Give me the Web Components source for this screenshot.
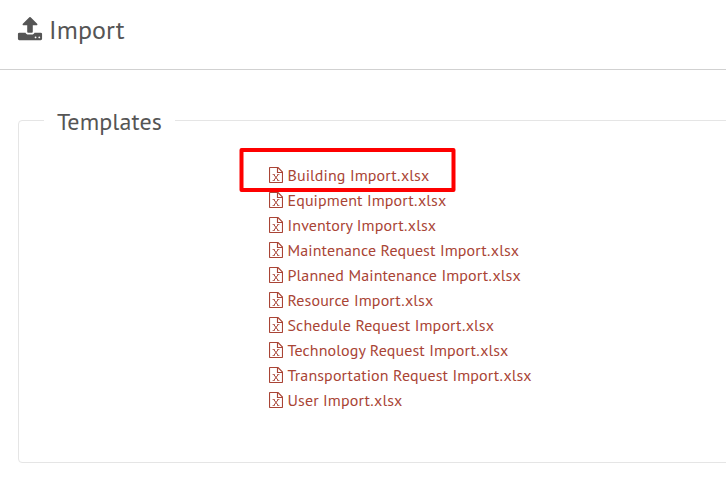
<!DOCTYPE html>
<html lang="en">
<head>
<meta charset="utf-8">
<title>Import</title>
<style>
    body{
        margin:0;
        overflow:hidden;
        background:#fff;
        color:#555;
        font-family:"PT Sans","Noto Sans",sans-serif;
    }
</style>
</head>
<body>
<import-page></import-page>
<script>
class PageHeader extends HTMLElement {
    constructor() {
        super();
        this.attachShadow({ mode: 'open' });
    }

    static get styles() {
        return /*css*/`
        :host{
            display:block;
            height:69px;
            border-bottom:1px solid #d1d1d1;
        }
        .header{
            display:flex;
            align-items:center;
            gap:6px;
            height:60px;
            padding-left:17px;
        }
        .header__icon{
            width:26px;
            height:26px;
            margin-top:-2px;
            fill:currentColor;
        }
        .header__title{
            margin:0;
            font-size:26px;
            font-weight:400;
            line-height:32px;
            letter-spacing:.1px;
        }
    `;
    }

    connectedCallback() {
        this.shadowRoot.innerHTML =/*html*/`
        <style>${PageHeader.styles}</style>
        <header class="header">
            <svg class="header__icon" viewBox="0 0 1792 1792" aria-hidden="true">
                <path d="M1344 1472q0-26-19-45t-45-19-45 19-19 45 19 45 45 19 45-19 19-45zm256 0q0-26-19-45t-45-19-45 19-19 45 19 45 45 19 45-19 19-45zm128-224v320q0 40-28 68t-68 28h-1472q-40 0-68-28t-28-68v-320q0-40 28-68t68-28h427q21 56 70.5 92t110.5 36h256q61 0 110.5-36t70.5-92h427q40 0 68 28t28 68zm-325-648q-17 40-59 40h-256v448q0 26-19 45t-45 19h-256q-26 0-45-19t-19-45v-448h-256q-42 0-59-40-17-39 14-69l448-448q18-19 45-19t45 19l448 448q31 30 14 69z"/>
            </svg>
            <h1 class="header__title"><slot></slot></h1>
        </header>
    `;
    }
}
customElements.define('page-header', PageHeader);

class FieldPanel extends HTMLElement {
    constructor() {
        super();
        this.attachShadow({ mode: 'open' });
    }

    static get styles() {
        return /*css*/`
        :host{
            display:block;
            margin:34px -20px 0 18px;
        }
        .panel{
            box-sizing:border-box;
            height:359px;
            margin:0;
            padding:26px 0 0 250px;
            border:1px solid #e5e5e5;
            border-radius:4px;
        }
        .panel__legend{
            box-sizing:border-box;
            width:131px;
            margin-left:-225px;
            padding:4px 0 0 13px;
            font-size:24px;
            line-height:28px;
            letter-spacing:.1px;
            white-space:nowrap;
        }
    `;
    }

    connectedCallback() {
        this.shadowRoot.innerHTML =/*html*/`
        <style>${FieldPanel.styles}</style>
        <fieldset class="panel">
            <legend class="panel__legend">${this.getAttribute('legend')}</legend>
            <slot></slot>
        </fieldset>
    `;
    }
}
customElements.define('field-panel', FieldPanel);

class TemplateLink extends HTMLElement {
    constructor() {
        super();
        this.attachShadow({ mode: 'open' });
    }

    static get styles() {
        return /*css*/`
        :host{
            display:block;
            position:relative;
            height:25px;
        }
        .link{
            display:inline-flex;
            align-items:center;
            gap:4.5px;
            height:25px;
            color:#a94435;
            font-size:16px;
            letter-spacing:.11px;
            text-decoration:none;
            white-space:nowrap;
        }
        .link__icon{
            width:14px;
            height:16px;
            margin-top:1px;
            fill:none;
            stroke:currentColor;
        }
        :host([marked])::after{
            content:"";
            position:absolute;
            box-sizing:border-box;
            left:-29px;
            top:-14px;
            width:216px;
            height:44px;
            border:4px solid #fe0000;
            border-radius:2px;
            transform:translateX(-.5px);
        }
    `;
    }

    connectedCallback() {
        this.shadowRoot.innerHTML =/*html*/`
        <style>${TemplateLink.styles}</style>
        <a class="link" href="#">
            <svg class="link__icon" viewBox="0 0 14 16" aria-hidden="true">
                <path stroke-width="1.150" d="M1.200.5H9L13.500 5V14.800Q13.500 15.500 12.800 15.500H1.200Q.5 15.500.5 14.800V1.200Q.5.5 1.200.5ZM8.500.5V5.500H13.500"/>
                <path stroke-opacity=".65" d="M3.500 7.500H6M8 7.500H10.500M3.500 13.500H6M8 13.500H10.500"/>
                <path d="M4.700 7.500L9.300 13.500M9.300 7.500L4.700 13.500"/>
            </svg>
            <span><slot></slot></span>
        </a>
    `;
    }
}
customElements.define('template-link', TemplateLink);

class ImportPage extends HTMLElement {
    constructor() {
        super();
        this.attachShadow({ mode: 'open' });
    }

    static get styles() {
        return /*css*/`
        :host{
            display:block;
            height:488px;
            overflow:hidden;
        }
    `;
    }

    connectedCallback() {
        this.shadowRoot.innerHTML =/*html*/`
        <style>${ImportPage.styles}</style>
        <page-header>Import</page-header>
        <field-panel legend="Templates">
            <template-link marked>Building Import.xlsx</template-link>
            <template-link>Equipment Import.xlsx</template-link>
            <template-link>Inventory Import.xlsx</template-link>
            <template-link>Maintenance Request Import.xlsx</template-link>
            <template-link>Planned Maintenance Import.xlsx</template-link>
            <template-link>Resource Import.xlsx</template-link>
            <template-link>Schedule Request Import.xlsx</template-link>
            <template-link>Technology Request Import.xlsx</template-link>
            <template-link>Transportation Request Import.xlsx</template-link>
            <template-link>User Import.xlsx</template-link>
        </field-panel>
    `;
    }
}
customElements.define('import-page', ImportPage);
</script>
</body>
</html>
